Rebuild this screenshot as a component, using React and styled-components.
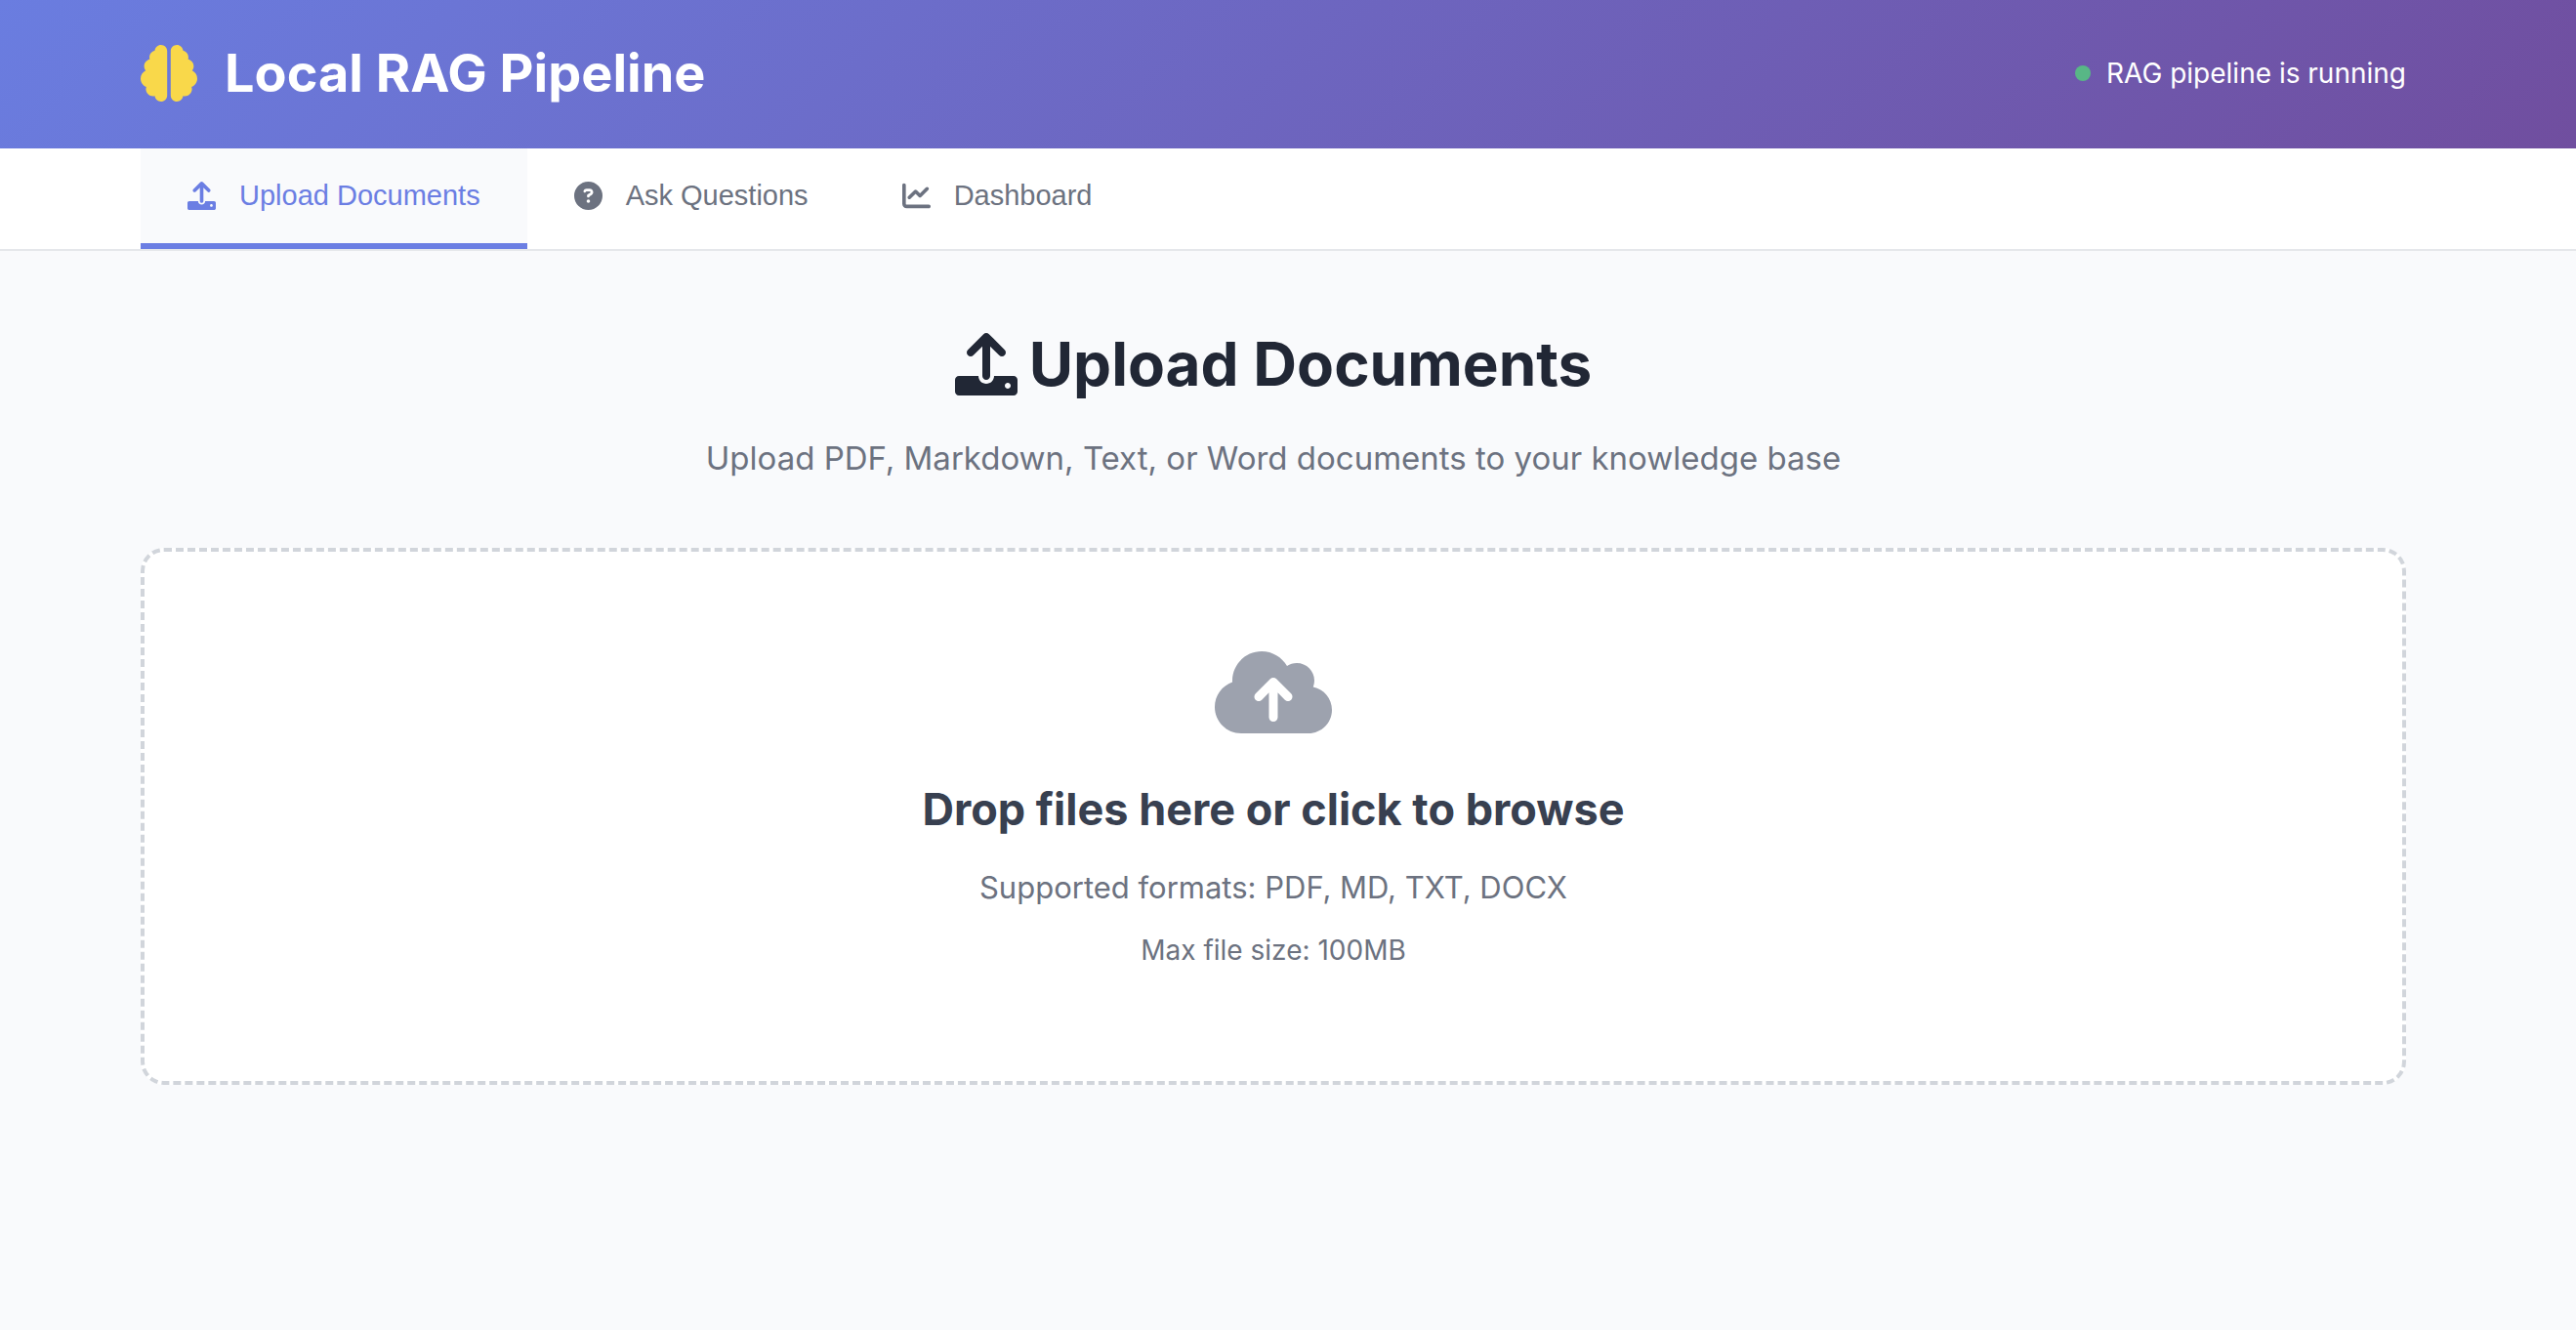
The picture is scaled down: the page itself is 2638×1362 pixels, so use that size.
import React, { useState } from "react";
import styled, { createGlobalStyle } from "styled-components";
import {
  FaBrain,
  FaCircleQuestion,
  FaChartLine,
  FaCloudArrowUp,
} from "react-icons/fa6";

const GlobalStyle = createGlobalStyle`
  *, *::before, *::after { box-sizing: border-box; }
  body {
    margin: 0;
    background: #f9fafc;
    color: #212735;
    font-family: Inter, "Liberation Sans", sans-serif;
  }
  h1, h2, h3, p { margin: 0; }
`;

const Page = styled.div`
  min-height: 100vh;
`;

const Band = styled.div`
  padding-right: 30px;
`;

const Container = styled.div`
  max-width: 2400px;
  margin: 0 auto;
  padding: 0 40px;
`;

const Header = styled(Band).attrs({ as: "header" })`
  background: linear-gradient(135deg, #6a7de0 0%, #704e9f 100%);
  color: #ffffff;
`;

const HeaderRow = styled(Container)`
  display: flex;
  align-items: center;
  justify-content: space-between;
  height: 152px;
  padding-bottom: 2px;
`;

const Brand = styled.h1`
  display: flex;
  align-items: center;
  gap: 28px;
  font-size: 54px;
  font-weight: 700;
  line-height: 64px;

  svg {
    color: #f9d84a;
    font-size: 58px;
  }
`;

const Status = styled.div`
  display: flex;
  align-items: center;
  gap: 16px;
  font-size: 28px;
  line-height: 48px;
`;

const StatusDot = styled.span`
  width: 16px;
  height: 16px;
  border-radius: 50%;
  background: #58b786;
`;

const NavBand = styled(Band).attrs({ as: "nav" })`
  background: #ffffff;
  border-bottom: 2px solid #e5e7eb;
`;

const Tabs = styled(Container)`
  display: flex;
`;

const Tab = styled.button`
  display: flex;
  align-items: center;
  gap: 24px;
  padding: 32px 48px;
  border: 0;
  border-bottom: 6px solid ${(p) => (p.$active ? "#6b7ee3" : "transparent")};
  background: ${(p) => (p.$active ? "#f9fafc" : "transparent")};
  color: ${(p) => (p.$active ? "#6b7ee3" : "#6c7280")};
  font-family: "Liberation Sans", Arial, sans-serif;
  font-size: 29px;
  line-height: 33px;
  cursor: pointer;
`;

const Main = styled(Band).attrs({ as: "main" })``;

const Section = styled(Container)`
  padding-top: 76px;
  padding-bottom: 76px;
`;

const SectionHead = styled.div`
  display: flex;
  flex-direction: column;
  align-items: center;
  gap: 28px;
  margin-bottom: 64px;
  text-align: center;
`;

const Title = styled.h2`
  display: flex;
  align-items: center;
  gap: 12px;
  font-size: 62px;
  font-weight: 700;
  line-height: 80px;

  svg {
    font-size: 64px;
  }
`;

const Subtitle = styled.p`
  color: #6c7280;
  font-size: 33px;
  line-height: 56px;
`;

const DropZone = styled.label`
  display: flex;
  flex-direction: column;
  align-items: center;
  padding: 96px 96px 110px;
  border: 4px dashed #d1d5db;
  border-radius: 24px;
  background: #ffffff;
  color: #6c7280;
  text-align: center;
  cursor: pointer;
`;

const CloudIcon = styled(FaCloudArrowUp)`
  width: 120px;
  height: 96px;
  color: #9da2ae;
`;

const FileInput = styled.input`
  position: absolute;
  width: 1px;
  height: 1px;
  opacity: 0;
  overflow: hidden;
`;

const DropTitle = styled.h3`
  margin-top: 32px;
  color: #384050;
  font-size: 45px;
  font-weight: 700;
  line-height: 80px;
`;

const Formats = styled.p`
  margin-top: 14px;
  font-size: 31px;
  line-height: 52px;
`;

const SizeLimit = styled.p`
  margin-top: 14px;
  font-size: 28px;
  line-height: 48px;
`;

function UploadIcon() {
  return (
    <svg viewBox="0 0 512 512" width="1em" height="1em" fill="currentColor" aria-hidden="true">
      <path d="M105.4 182.6c12.5 12.5 32.8 12.5 45.3 0L224 109.3V352c0 17.7 14.3 32 32 32s32-14.3 32-32V109.3l73.4 73.4c12.5 12.5 32.8 12.5 45.3 0s12.5-32.8 0-45.3l-128-128C272.4 3.1 264.2 0 256 0s-16.4 3.1-22.6 9.4l-128 128c-12.5 12.5-12.5 32.7 0 45.2zM480 352H320c0 35.3-28.7 64-64 64s-64-28.7-64-64H32c-17.7 0-32 14.3-32 32v96c0 17.7 14.3 32 32 32h448c17.7 0 32-14.3 32-32v-96c0-17.7-14.3-32-32-32zM432 456c-13.2 0-24-10.8-24-24s10.8-24 24-24 24 10.8 24 24-10.8 24-24 24z" />
    </svg>
  );
}

const TABS = [
  { id: "upload", label: "Upload Documents", Icon: UploadIcon },
  { id: "ask", label: "Ask Questions", Icon: FaCircleQuestion },
  { id: "dashboard", label: "Dashboard", Icon: FaChartLine },
];

export default function App() {
  const [active, setActive] = useState("upload");

  return (
    <Page>
      <GlobalStyle />
      <Header>
        <HeaderRow>
          <Brand>
            <FaBrain aria-hidden="true" />
            Local RAG Pipeline
          </Brand>
          <Status role="status">
            <StatusDot />
            RAG pipeline is running
          </Status>
        </HeaderRow>
      </Header>
      <NavBand>
        <Tabs>
          {TABS.map(({ id, label, Icon }) => (
            <Tab
              key={id}
              type="button"
              $active={active === id}
              onClick={() => setActive(id)}
            >
              <Icon aria-hidden="true" />
              {label}
            </Tab>
          ))}
        </Tabs>
      </NavBand>
      <Main>
        <Section>
          <SectionHead>
            <Title>
              <UploadIcon />
              Upload Documents
            </Title>
            <Subtitle>
              Upload PDF, Markdown, Text, or Word documents to your knowledge base
            </Subtitle>
          </SectionHead>
          <DropZone htmlFor="files">
            <FileInput id="files" type="file" multiple accept=".pdf,.md,.txt,.docx" />
            <CloudIcon aria-hidden="true" />
            <DropTitle>Drop files here or click to browse</DropTitle>
            <Formats>Supported formats: PDF, MD, TXT, DOCX</Formats>
            <SizeLimit>Max file size: 100MB</SizeLimit>
          </DropZone>
        </Section>
      </Main>
    </Page>
  );
}
